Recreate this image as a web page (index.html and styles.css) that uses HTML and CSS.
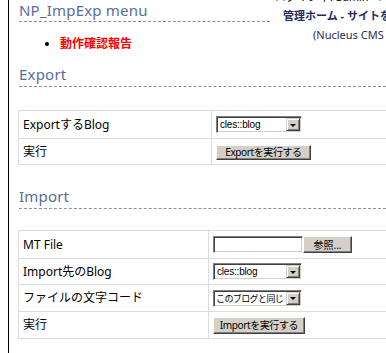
FILE: index.html
```html
<!DOCTYPE html>
<html lang="ja">
<head>
<meta charset="utf-8">
<title>NP_ImpExp menu</title>
<link rel="stylesheet" href="styles.css">
</head>
<body>
<div class="page">
  <div class="top">
    <h2 class="title">NP_ImpExp menu</h2>
    <div class="login">
      <div class="l1">ログイン中: admin - ログアウト</div>
      <div class="l2">管理ホーム - サイトを見る</div>
      <div class="l3">(Nucleus CMS v3.24)</div>
    </div>
  </div>
  <ul class="menu">
    <li><a class="report">動作確認報告</a></li>
  </ul>

  <h2 class="sec export">Export</h2>
  <table class="form t-export">
    <tr class="h28">
      <td class="lab">ExportするBlog</td>
      <td class="val"><span class="sel w86"><span class="opt lat">cles::blog</span><span class="drop"></span></span></td>
    </tr>
    <tr class="h26">
      <td class="lab">実行</td>
      <td class="val"><button class="btn b-export">Exportを実行する</button></td>
    </tr>
  </table>

  <h2 class="sec import">Import</h2>
  <table class="form t-import">
    <tr class="h28">
      <td class="lab">MT File</td>
      <td class="val"><span class="file-row"><span class="textbox"></span><button class="btn b-browse">参照...</button></span></td>
    </tr>
    <tr class="h26">
      <td class="lab">Import先のBlog</td>
      <td class="val"><span class="sel w88"><span class="opt lat">cles::blog</span><span class="drop"></span></span></td>
    </tr>
    <tr class="h27">
      <td class="lab">ファイルの文字コード</td>
      <td class="val"><span class="sel w88"><span class="opt jp">このブログと同じ</span><span class="drop"></span></span></td>
    </tr>
    <tr class="h27">
      <td class="lab">実行</td>
      <td class="val"><button class="btn b-import">Importを実行する</button></td>
    </tr>
  </table>
</div>
</body>
</html>
```
FILE: styles.css
```css
html, body {
  margin: 0;
  padding: 0;
  overflow: hidden;
  background: #fff;
}
body {
  font-family: "Noto Sans", "Noto Sans CJK JP", sans-serif;
  color: #000;
}
.page {
  margin-left: 8px;
  border-left: 1px solid #000;
  height: 353px;
  padding-left: 9px;
  box-sizing: border-box;
}
.top {
  display: flex;
  align-items: flex-start;
  height: 22px;
}
h2 {
  margin: 0 0 0 1px;
  padding: 2px 0 3px;
  font: normal 15px/17px "Noto Sans", sans-serif;
  color: #596d9b;
  border-bottom: 1px dashed #8f8f8f;
  letter-spacing: 0.2px;
}
.title {
  width: 251px;
  flex: none;
  padding-bottom: 2px;
}
.login {
  margin-top: -13px;
  margin-left: 4px;
  white-space: nowrap;
  font-family: "Noto Sans", "Noto Sans CJK JP", sans-serif;
  font-size: 11px;
  line-height: 19px;
}
.l1 { padding-left: 1px; color: #000; }
.l2 { padding-left: 9px; color: #1e2d5e; font-weight: bold; }
.l3 { padding-left: 39px; color: #1e2d5e; }

.menu {
  margin: 13px 0 0;
  padding-left: 42px;
  font-size: 12px;
  line-height: 16px;
}
.report {
  color: #f00;
  font-weight: bold;
  font-family: "Noto Sans CJK JP", sans-serif;
}
.sec.export { margin-top: 12px; }
.sec.import { margin-top: 21px; }

.form {
  border-collapse: collapse;
  width: 400px;
  margin-top: 23px;
}
.t-import { margin-top: 21px; }
.form td {
  border: 1px solid #dcdcdc;
  padding: 0 0 0 4px;
  box-sizing: border-box;
  font-size: 12px;
  line-height: 16px;
  vertical-align: middle;
  white-space: nowrap;
}
.t-export .lab { width: 193px; }
.t-import .lab { width: 190px; }
.h28 td { height: 28px; }
.h26 td { height: 26px; }
.h27 td { height: 27px; }

.sel, .textbox {
  display: inline-flex;
  align-items: stretch;
  height: 17px;
  box-sizing: border-box;
  background: #fff;
  border: 1px solid;
  border-color: #808080 #fff #fff #808080;
  box-shadow: inset 1px 1px 0 #404040, inset -1px -1px 0 #d4d0c8;
  vertical-align: middle;
  padding: 1px;
}
.w86 { width: 86px; }
.w88 { width: 89px; }
.opt {
  flex: 1;
  min-width: 0;
  padding-left: 2px;
  line-height: 13px;
  overflow: hidden;
  white-space: nowrap;
}
.opt.lat {
  font: 10px/13px "Liberation Sans", sans-serif;
  letter-spacing: -0.2px;
}
.opt.jp {
  padding-left: 1px;
  font: 9px/13px "Noto Sans CJK JP", sans-serif;
  letter-spacing: -0.6px;
}
.drop {
  width: 14px;
  flex: none;
  box-sizing: border-box;
  background: #d4d0c8;
  border: 1px solid;
  border-color: #d4d0c8 #404040 #404040 #d4d0c8;
  box-shadow: inset 1px 1px 0 #fff, inset -1px -1px 0 #808080;
  display: flex;
  align-items: center;
  justify-content: center;
}
.drop::after {
  content: "";
  width: 0;
  height: 0;
  border-top: 3px solid #000;
  border-left: 3px solid transparent;
  border-right: 3px solid transparent;
  margin-top: 1px;
}
.textbox { width: 90px; }
.file-row {
  display: inline-flex;
  align-items: center;
  vertical-align: middle;
}
.btn {
  appearance: none;
  -webkit-appearance: none;
  margin: 0;
  padding: 0;
  box-sizing: border-box;
  display: inline-flex;
  align-items: center;
  justify-content: center;
  background: #d4d0c8;
  border: 1px solid;
  border-color: #fff #404040 #404040 #fff;
  box-shadow: inset -1px -1px 0 #808080;
  font-family: "Noto Sans", "Noto Sans CJK JP", sans-serif;
  font-size: 10px;
  line-height: 12px;
  letter-spacing: -0.4px;
  color: #000;
  vertical-align: middle;
}
.b-export { width: 95px; height: 15px; }
.b-import { width: 92px; height: 17px; }
.b-browse { width: 49px; height: 17px; letter-spacing: 0; }
```
